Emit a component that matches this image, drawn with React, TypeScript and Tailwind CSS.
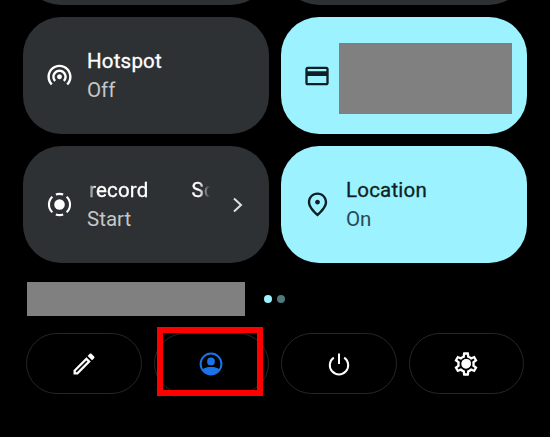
import React from 'react';

const font = { fontFamily: '"Roboto", "Liberation Sans", sans-serif' };

const Icon = ({ d, className, size = 29 }: { d: string; className?: string; size?: number }) => (
  <svg width={size} height={size} viewBox="0 0 24 24" fill="currentColor" className={className}>
    <path d={d} />
  </svg>
);

const hotspotPath =
  'M12 11c-1.1 0-2 .9-2 2 0 .55.23 1.05.59 1.41.36.36.86.59 1.41.59s1.05-.23 1.41-.59c.36-.36.59-.86.59-1.41 0-1.1-.9-2-2-2zm0-4c-3.31 0-6 2.69-6 6 0 1.66.68 3.15 1.76 4.24l1.42-1.42C8.45 15.1 8 14.1 8 13c0-2.21 1.79-4 4-4s4 1.79 4 4c0 1.1-.45 2.1-1.18 2.82l1.42 1.42C17.32 16.15 18 14.66 18 13c0-3.31-2.69-6-6-6zm0-4C6.48 3 2 7.48 2 13c0 2.76 1.12 5.26 2.93 7.07l1.42-1.42C4.9 17.21 4 15.21 4 13c0-4.42 3.58-8 8-8s8 3.58 8 8c0 2.21-.9 4.21-2.35 5.65l1.42 1.42C20.88 18.26 22 15.76 22 13c0-5.52-4.48-10-10-10z';
const cardPath =
  'M20 4H4c-1.11 0-1.99.89-1.99 2L2 18c0 1.11.89 2 2 2h16c1.11 0 2-.89 2-2V6c0-1.11-.89-2-2-2zm0 14H4v-6h16v6zm0-10H4V6h16v2z';
const pinPath =
  'M12 12c-1.1 0-2-.9-2-2s.9-2 2-2 2 .9 2 2-.9 2-2 2zm6-1.8C18 6.57 15.35 4 12 4s-6 2.57-6 6.2c0 2.34 1.95 5.44 6 9.14 4.05-3.7 6-6.8 6-9.14zM12 2c4.2 0 8 3.22 8 8.2 0 3.32-2.67 7.25-8 11.8-5.33-4.55-8-8.48-8-11.8C4 5.22 7.8 2 12 2z';
const editPath =
  'M14.06 9.02l.92.92L5.92 19H5v-.92l9.06-9.06M17.66 3c-.25 0-.51.1-.7.29l-1.83 1.83 3.75 3.75 1.83-1.83c.39-.39.39-1.02 0-1.41l-2.34-2.34c-.2-.2-.45-.29-.71-.29zm-3.6 3.19L3 17.25V21h3.75L17.81 9.94l-3.75-3.75z';
const gearPath =
  'M19.43 12.98c.04-.32.07-.64.07-.98 0-.34-.03-.66-.07-.98l2.11-1.65c.19-.15.24-.42.12-.64l-2-3.46c-.09-.16-.26-.25-.44-.25-.06 0-.12.01-.17.03l-2.49 1c-.52-.4-1.08-.73-1.69-.98l-.38-2.65C14.46 2.18 14.25 2 14 2h-4c-.25 0-.46.18-.49.42l-.38 2.65c-.61.25-1.17.59-1.69.98l-2.49-1c-.06-.02-.12-.03-.18-.03-.17 0-.34.09-.43.25l-2 3.46c-.13.22-.07.49.12.64l2.11 1.65c-.04.32-.07.65-.07.98 0 .33.03.66.07.98l-2.11 1.65c-.19.15-.24.42-.12.64l2 3.46c.09.16.26.25.44.25.06 0 .12-.01.17-.03l2.49-1c.52.4 1.08.73 1.69.98l.38 2.65c.03.24.24.42.49.42h4c.25 0 .46-.18.49-.42l.38-2.65c.61-.25 1.17-.59 1.69-.98l2.49 1c.06.02.12.03.18.03.17 0 .34-.09.43-.25l2-3.46c.12-.22.07-.49-.12-.64l-2.11-1.65zm-1.98-1.71c.04.31.05.52.05.73 0 .21-.02.43-.05.73l-.14 1.13.89.7 1.08.84-.7 1.21-1.27-.51-1.04-.42-.9.68c-.43.32-.84.56-1.25.73l-1.06.43-.16 1.13-.2 1.35h-1.4l-.19-1.35-.16-1.13-1.06-.43c-.43-.18-.83-.41-1.23-.71l-.91-.7-1.06.43-1.27.51-.7-1.21 1.08-.84.89-.7-.14-1.13c-.03-.31-.05-.54-.05-.74s.02-.43.05-.73l.14-1.13-.89-.7-1.08-.84.7-1.21 1.27.51 1.04.42.9-.68c.43-.32.84-.56 1.25-.73l1.06-.43.16-1.13.2-1.35h1.39l.19 1.35.16 1.13 1.06.43c.43.18.83.41 1.23.71l.91.7 1.06-.43 1.27-.51.7 1.21-1.07.85-.89.7.14 1.13zM12 8c-2.21 0-4 1.79-4 4s1.79 4 4 4 4-1.79 4-4-1.79-4-4-4z';

// dashed ring with a solid dot, the screen record tile
const RecordIcon = () => (
  <svg width="25" height="25" viewBox="0 0 26 26" fill="none" stroke="currentColor" strokeWidth="2.2">
    <circle cx="13" cy="13" r="5.5" fill="currentColor" stroke="none" />
    <path d="M9.2 2.6a11 11 0 0 1 7.6 0" />
    <path d="M20.4 4.9a11 11 0 0 1 0 16.2" />
    <path d="M16.8 23.4a11 11 0 0 1-7.6 0" />
    <path d="M5.6 21.1a11 11 0 0 1 0-16.2" />
  </svg>
);

const AccountIcon = () => (
  <svg width="24" height="24" viewBox="0 0 24 24" className="text-[#1a73e8]">
    <circle cx="12" cy="12" r="10.4" fill="none" stroke="currentColor" strokeWidth="2" />
    <circle cx="12" cy="9.4" r="3.9" fill="currentColor" />
    <path d="M3.6 17.2C5.6 15.6 8.6 15 12 15s6.4.6 8.4 2.2A10.6 10.6 0 0 1 12 22.4a10.6 10.6 0 0 1-8.4-5.2z" fill="currentColor" />
  </svg>
);

const PowerIcon = () => (
  <svg width="24" height="24" viewBox="0 0 24 24" fill="none" stroke="currentColor" strokeWidth="2">
    <path d="M12 1.5V12" />
    <path d="M6.8 5.6a9.2 9.2 0 1 0 10.4 0" />
  </svg>
);

const Tile = ({ active, children }: { active?: boolean; children?: React.ReactNode }) => (
  <div
    className={`flex h-[117px] items-center rounded-[38px] ${
      active ? 'bg-[#9cf2ff] text-[#0f1f24]' : 'bg-[#2d3133] text-white'
    }`}
  >
    {children}
  </div>
);

const Label = ({ title, sub, active }: { title: string; sub: string; active?: boolean }) => (
  <div className="flex flex-col">
    <span className="text-[20.5px] leading-[29px] tracking-[0.2px] [-webkit-text-stroke:0.3px_currentColor]">{title}</span>
    <span className={`text-[20.5px] leading-[29px] ${active ? 'text-[#2b4a52]' : 'text-[#c4c7c9]'}`}>{sub}</span>
  </div>
);

const Pill = ({ children }: { children: React.ReactNode }) => (
  <div className="flex h-[61px] flex-1 items-center justify-center rounded-[31px] border border-[#262626] text-white">
    {children}
  </div>
);

export default function App() {
  return (
    <div className="relative h-[437px] w-[550px] overflow-hidden bg-black" style={font}>
      <div className="mt-[-112px] grid grid-cols-2 gap-3 px-[23px]">
        <Tile />
        <Tile />

        <Tile>
          <Icon d={hotspotPath} className="ml-[22px] mr-[13px]" />
          <Label title="Hotspot" sub="Off" />
        </Tile>
        <Tile active>
          <Icon d={cardPath} className="ml-[22px] mr-[8px] text-[#0f1f24]" size={28} />
          <div className="mt-[6px] h-[71px] w-[173px] bg-[#808080]" />
        </Tile>

        <Tile>
          <div className="ml-[24px] mr-[15px] flex">
            <RecordIcon />
          </div>
          <div className="flex flex-col">
            <div className="flex w-[123px] whitespace-nowrap text-[20.5px] leading-[29px] tracking-[0.2px] [-webkit-text-stroke:0.3px_currentColor] [mask-image:linear-gradient(90deg,transparent,#000_8px,#000_112px,transparent)]">
              <span className="ml-[2px]">record</span>
              <span className="ml-[43px]">Sc</span>
            </div>
            <span className="text-[20.5px] leading-[29px] text-[#c4c7c9]">Start</span>
          </div>
          <svg width="14" height="18" viewBox="0 0 14 18" fill="none" stroke="currentColor" strokeWidth="2" className="ml-[21px] text-[#dfe1e2]">
            <path d="M3 2.5 10 9l-7 6.5" />
          </svg>
        </Tile>
        <Tile active>
          <Icon d={pinPath} className="ml-[22px] mr-[14px]" />
          <Label title="Location" sub="On" active />
        </Tile>
      </div>

      <div className="mt-[19px] flex h-[34px] items-center pl-[27px]">
        <div className="h-[34px] w-[218px] bg-[#808080]" />
        <div className="ml-[19px] h-2 w-2 rounded-full bg-[#9cf2ff]" />
        <div className="ml-[5px] h-2 w-2 rounded-full bg-[#4f7a7d]" />
      </div>

      <div className="mt-[17px] ml-[26px] flex w-[498px] gap-3">
        <Pill>
          <Icon d={editPath} size={28} />
        </Pill>
        <Pill>
          <AccountIcon />
        </Pill>
        <Pill>
          <PowerIcon />
        </Pill>
        <Pill>
          <Icon d={gearPath} size={28} />
          <div className="absolute h-[9px] w-[9px] rounded-full bg-white" />
        </Pill>
      </div>

      {/* red highlight from the screenshot's annotation */}
      <div className="absolute left-[157px] top-[327px] h-[69px] w-[106px] border-[6px] border-[#ff0000]" />
    </div>
  );
}
